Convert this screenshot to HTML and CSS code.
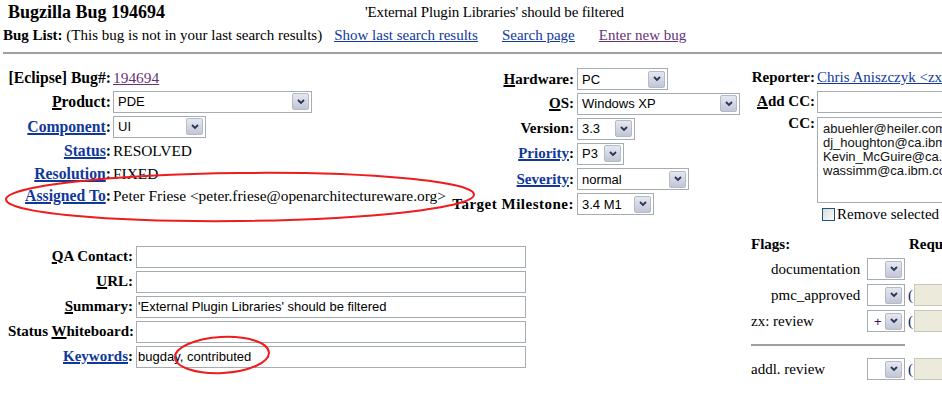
FILE: index.html
```html
<!DOCTYPE html>
<html lang="en">
<head>
  <meta charset="UTF-8">
  <title>Bug 194694 - 'External Plugin Libraries' should be filtered</title>
  <link rel="stylesheet" href="styles.css">
</head>
<body>
  <div class="header">
    <div class="bug-title">Bugzilla Bug 194694</div>
    <div class="bug-summary">'External Plugin Libraries' should be filtered</div>
  </div>
  <div class="buglist">
    <b>Bug List:</b> (This bug is not in your last search results)<a href="#" class="first">Show last search results</a><a href="#">Search page</a><a href="#" class="visited">Enter new bug</a>
  </div>
  <hr class="rule">

  <form class="main">
    <div class="col-left">
      <div class="lbl">[Eclipse] Bug#:</div>
      <div class="val"><a href="#" class="visited">194694</a></div>

      <div class="lbl"><u>P</u>roduct:</div>
      <div class="val">
        <span class="combo w-product"><select><option>PDE</option></select><span class="drop"><svg viewBox="0 0 8 6"><polyline points="1,1 4,4 7,1"/></svg></span></span>
      </div>

      <div class="lbl"><a href="#">Component</a>:</div>
      <div class="val">
        <span class="combo w-component"><select><option>UI</option></select><span class="drop"><svg viewBox="0 0 8 6"><polyline points="1,1 4,4 7,1"/></svg></span></span>
      </div>

      <div class="lbl"><a href="#">Status</a>:</div>
      <div class="val">RESOLVED</div>

      <div class="lbl"><a href="#">Resolution</a>:</div>
      <div class="val">FIXED</div>

      <div class="lbl"><a href="#">Assigned To</a>:</div>
      <div class="val">Peter Friese &lt;peter.friese@openarchitectureware.org&gt;</div>
    </div>

    <div class="col-mid">
      <div class="lbl"><u>H</u>ardware:</div>
      <div class="val">
        <span class="combo w-hardware"><select><option>PC</option></select><span class="drop"><svg viewBox="0 0 8 6"><polyline points="1,1 4,4 7,1"/></svg></span></span>
      </div>

      <div class="lbl"><u>O</u>S:</div>
      <div class="val">
        <span class="combo w-os"><select><option>Windows XP</option></select><span class="drop"><svg viewBox="0 0 8 6"><polyline points="1,1 4,4 7,1"/></svg></span></span>
      </div>

      <div class="lbl">Version:</div>
      <div class="val">
        <span class="combo w-version"><select><option>3.3</option></select><span class="drop"><svg viewBox="0 0 8 6"><polyline points="1,1 4,4 7,1"/></svg></span></span>
      </div>

      <div class="lbl"><a href="#">Priority</a>:</div>
      <div class="val">
        <span class="combo w-priority"><select><option>P3</option></select><span class="drop"><svg viewBox="0 0 8 6"><polyline points="1,1 4,4 7,1"/></svg></span></span>
      </div>

      <div class="lbl"><a href="#">Severity</a>:</div>
      <div class="val">
        <span class="combo w-severity"><select><option>normal</option></select><span class="drop"><svg viewBox="0 0 8 6"><polyline points="1,1 4,4 7,1"/></svg></span></span>
      </div>

      <div class="lbl wide">Target Milestone:</div>
      <div class="val">
        <span class="combo w-milestone"><select><option>3.4 M1</option></select><span class="drop"><svg viewBox="0 0 8 6"><polyline points="1,1 4,4 7,1"/></svg></span></span>
      </div>
    </div>

    <div class="col-right">
      <div class="lbl">Reporter:</div>
      <div class="val"><a href="#">Chris Aniszczyk &lt;zx@us.ibm.com&gt;</a></div>

      <div class="lbl"><u>A</u>dd CC:</div>
      <div class="val"><input type="text" class="text w-addcc"></div>

      <div class="lbl lbl-top">CC:</div>
      <div class="val">
        <div class="listbox">
          <div>abuehler@heiler.com</div>
          <div>dj_houghton@ca.ibm.com</div>
          <div>Kevin_McGuire@ca.ibm.com</div>
          <div>wassimm@ca.ibm.com</div>
        </div>
      </div>

      <div class="lbl"></div>
      <div class="val remove">
        <input type="checkbox" class="check"> Remove selected CCs
      </div>
    </div>
  </form>

  <div class="lower">
    <div class="col-fields">
      <div class="lbl"><u>Q</u>A Contact:</div>
      <div class="val"><input type="text" class="text w-field"></div>

      <div class="lbl"><u>U</u>RL:</div>
      <div class="val"><input type="text" class="text w-field"></div>

      <div class="lbl"><u>S</u>ummary:</div>
      <div class="val"><input type="text" class="text w-field" value="'External Plugin Libraries' should be filtered"></div>

      <div class="lbl">Status <u>W</u>hiteboard:</div>
      <div class="val"><input type="text" class="text w-field"></div>

      <div class="lbl"><a href="#">Keywords</a>:</div>
      <div class="val"><input type="text" class="text w-field" value="bugday, contributed"></div>
    </div>

    <div class="flags">
      <div class="flags-head">Flags:</div>
      <div class="flags-req">Requestee:</div>

      <div class="flag-name indent">documentation</div>
      <div class="flag-sel">
        <span class="combo w-flag"><select><option> </option></select><span class="drop"><svg viewBox="0 0 8 6"><polyline points="1,1 4,4 7,1"/></svg></span></span>
      </div>
      <div class="flag-req"></div>

      <div class="flag-name indent">pmc_approved</div>
      <div class="flag-sel">
        <span class="combo w-flag"><select><option> </option></select><span class="drop"><svg viewBox="0 0 8 6"><polyline points="1,1 4,4 7,1"/></svg></span></span>
      </div>
      <div class="flag-req">(<input type="text" class="requestee" disabled></div>

      <div class="flag-name">zx: review</div>
      <div class="flag-sel">
        <span class="combo w-flag plus"><select><option>+</option></select><span class="drop"><svg viewBox="0 0 8 6"><polyline points="1,1 4,4 7,1"/></svg></span></span>
      </div>
      <div class="flag-req">(<input type="text" class="requestee" disabled></div>

      <hr class="flag-rule">

      <div class="flag-name">addl. review</div>
      <div class="flag-sel">
        <span class="combo w-flag"><select><option> </option></select><span class="drop"><svg viewBox="0 0 8 6"><polyline points="1,1 4,4 7,1"/></svg></span></span>
      </div>
      <div class="flag-req">(<input type="text" class="requestee" disabled></div>
    </div>
  </div>

  <!-- hand-drawn markers over the screenshot -->
  <svg class="marks" width="942" height="394" viewBox="0 0 942 394">
    <ellipse cx="240" cy="197" rx="234" ry="24" transform="rotate(-0.6 240 197)"/>
    <ellipse cx="222" cy="355" rx="47" ry="18" transform="rotate(-3 222 355)"/>
  </svg>
</body>
</html>
```

FILE: styles.css
```css
html, body {
  margin: 0;
  overflow: hidden;
}

body {
  font-family: "Liberation Serif", "Times New Roman", serif;
  font-size: 15px;
  color: #000;
  background: #fff;
  width: 942px;
  height: 394px;
  position: relative;
}

a {
  color: #10389c;
}

a.visited {
  color: #663377;
}

u {
  text-decoration-thickness: 2px;
}

/* header */
.header {
  display: flex;
  height: 20px;
  line-height: 20px;
  margin-top: 2px;
  padding-left: 8px;
  white-space: nowrap;
}

.bug-title {
  font-size: 18px;
  font-weight: bold;
  width: 357px;
}

.bug-summary {
  letter-spacing: -0.15px;
}

.buglist {
  height: 20px;
  line-height: 20px;
  margin-top: 3px;
  padding-left: 3px;
  white-space: nowrap;
}

.buglist a {
  margin-left: 24px;
}

.buglist a.first {
  margin-left: 12px;
}

.rule {
  margin: 7px 0 0 3px;
  border: 0;
  border-top: 2px solid #a0a0a0;
  height: 0;
}

/* main three columns */
.main {
  display: grid;
  grid-template-columns: 444px 297px 1fr;
  margin: 12px 0 0 0;
  padding-left: 8px;
}

.lbl {
  text-align: right;
  font-weight: bold;
  white-space: nowrap;
}

.lbl a {
  text-decoration-thickness: 2px;
}

.val {
  white-space: nowrap;
  display: flex;
  align-items: center;
}

.col-left {
  display: grid;
  grid-template-columns: 103px auto;
  grid-template-rows: 23px 25px 25px 23px 23px 22px;
  column-gap: 2px;
  align-items: center;
  font-size: 15.4px;
}

.col-left .lbl {
  font-size: 15.7px;
}

.col-mid {
  display: grid;
  grid-template-columns: 122px auto;
  grid-template-rows: 24px 25px 25px 25px 26px 24px;
  column-gap: 3px;
  align-items: center;
  margin-top: 1px;
}

.col-mid .wide {
  letter-spacing: 0.5px;
}

.col-right {
  display: grid;
  grid-template-columns: 66px 1fr;
  grid-template-rows: 23px 25px auto 22px;
  column-gap: 2px;
  align-items: center;
  overflow: hidden;
}

.lbl-top {
  align-self: start;
  margin-top: 1px;
}

/* windows xp style combo box */
.combo {
  display: inline-flex;
  align-items: center;
  height: 22px;
  box-sizing: border-box;
  border: 1px solid #a5acb2;
  background: #fff;
}

.combo select {
  appearance: none;
  -webkit-appearance: none;
  border: 0;
  background: transparent;
  font: 13px "Liberation Sans", Arial, sans-serif;
  color: #000;
  padding: 0 0 0 4px;
  margin: 0;
  flex: 1;
  min-width: 0;
  height: 20px;
  outline: none;
}

.drop {
  flex: none;
  width: 15px;
  height: 15px;
  margin-right: 2px;
  border: 1px solid #b5bac9;
  border-radius: 2px;
  background: linear-gradient(#e6e8f0, #c2c5d6);
  display: flex;
  align-items: center;
  justify-content: center;
}

.drop svg {
  width: 8px;
  height: 6px;
  fill: none;
  stroke: #2a3556;
  stroke-width: 1.8;
}

.w-product { width: 199px; }
.w-component { width: 93px; }
.w-hardware { width: 91px; }
.w-os { width: 163px; }
.w-version { width: 58px; }
.w-priority { width: 47px; }
.w-severity { width: 112px; }
.w-milestone { width: 77px; }
.w-flag { width: 38px; }

.plus select {
  color: #3a1050;
  padding-left: 6px;
}

.text {
  height: 22px;
  box-sizing: border-box;
  border: 1px solid #a5acb2;
  font: 13px "Liberation Sans", Arial, sans-serif;
  padding: 0 1px;
  margin: 0;
  outline: none;
}

.w-addcc { width: 140px; }
.w-field { width: 390px; }

.listbox {
  margin-top: 3px;
  width: 140px;
  height: 86px;
  box-sizing: border-box;
  border: 1px solid #a5acb2;
  padding: 4px 0 0 5px;
  font: 13px "Liberation Sans", Arial, sans-serif;
  line-height: 14px;
  color: #111;
}

.remove {
  padding-left: 5px;
  gap: 2px;
}

.check {
  appearance: none;
  -webkit-appearance: none;
  width: 13px;
  height: 13px;
  margin: 0;
  border: 1px solid #1c5180;
  background: linear-gradient(135deg, #dcdcd7, #fbfbf9);
}

/* lower block */
.lower {
  display: grid;
  grid-template-columns: 743px 1fr;
  margin-top: 8px;
  padding-left: 8px;
}

.col-fields {
  display: grid;
  grid-template-columns: 125px auto;
  grid-auto-rows: 25px;
  column-gap: 3px;
  align-items: center;
  align-content: start;
  margin-top: 11px;
}

.flags {
  display: grid;
  grid-template-columns: 116px 38px 1fr;
  grid-template-rows: 23px 26px 26px 26px 22px 26px;
  align-items: center;
  white-space: nowrap;
  overflow: hidden;
}

.flags-head {
  grid-column: 1 / 3;
  font-weight: bold;
}

.flags-req {
  font-weight: bold;
  padding-left: 4px;
}

.flag-name {
  grid-column: 1;
}

.indent {
  padding-left: 20px;
}

.flag-req {
  display: flex;
  align-items: center;
  padding-left: 3px;
  color: #1a1a60;
}

.requestee {
  margin: 0 0 0 1px;
  width: 60px;
  height: 22px;
  box-sizing: border-box;
  border: 1px solid #c9c7ba;
  background: #ebeadb;
}

.flag-rule {
  grid-column: 1 / 3;
  width: 100%;
  margin: 0;
  border: 0;
  border-top: 2px solid #a0a0a0;
  height: 0;
}

/* red marker ellipses */
.marks {
  position: absolute;
  left: 0;
  top: 0;
  pointer-events: none;
}

.marks ellipse {
  fill: none;
  stroke: #ee1c1c;
  stroke-width: 2;
}
```
